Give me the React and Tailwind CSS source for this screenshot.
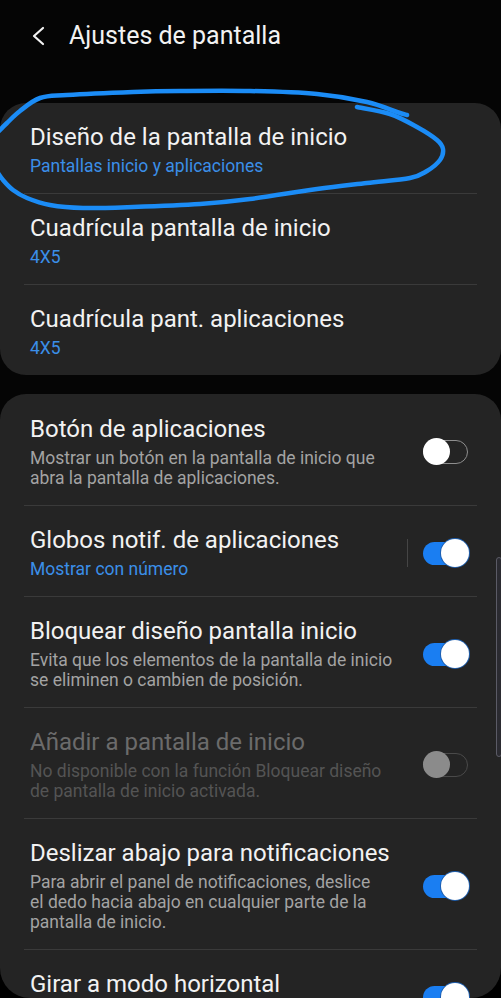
import React from "react";

// hand drawn blue ring around the first entry
const strokeA = [
  [407, 115], [397, 112], [367, 102], [317, 94], [250, 91], [180, 91], [133, 92],
  [67, 95], [40, 98], [20, 111], [7, 123], [-3, 133],
];
const strokeB = [
  [357, 107], [390, 114], [417, 127], [437, 140], [443, 149], [440, 160],
  [427, 171], [410, 178], [367, 183], [317, 189], [250, 199], [200, 204],
  [133, 207], [83, 208], [50, 205], [27, 198], [13, 190], [3, 180], [-4, 170],
];

function smooth(pts) {
  let d = `M${pts[0][0]} ${pts[0][1]}`;
  for (let i = 0; i < pts.length - 1; i++) {
    const p0 = pts[i - 1] || pts[i];
    const p1 = pts[i];
    const p2 = pts[i + 1];
    const p3 = pts[i + 2] || p2;
    const c1 = [p1[0] + (p2[0] - p0[0]) / 6, p1[1] + (p2[1] - p0[1]) / 6];
    const c2 = [p2[0] - (p3[0] - p1[0]) / 6, p2[1] - (p3[1] - p1[1]) / 6];
    d += ` C${c1[0]} ${c1[1]} ${c2[0]} ${c2[1]} ${p2[0]} ${p2[1]}`;
  }
  return d;
}

function Toggle({ on, disabled }) {
  if (on) {
    return (
      <div className="relative w-[46px] h-[28px] shrink-0">
        <div className="absolute left-0 top-[3px] w-[45px] h-[23px] rounded-full bg-[#1a7ef2]" />
        <div className="absolute right-0 top-0 w-[28px] h-[28px] rounded-full bg-white shadow-[0_0_0_1px_#1f5fae]" />
      </div>
    );
  }
  return (
    <div className="relative w-[46px] h-[28px] shrink-0">
      <div
        className={
          "absolute left-0 top-[2px] w-[45px] h-[24px] rounded-full border-[1.5px] " +
          (disabled ? "border-[#4a4a4a]" : "border-[#8e8e8e]")
        }
      />
      <div
        className={
          "absolute left-0 top-0 w-[27px] h-[27px] rounded-full " +
          (disabled ? "bg-[#8b8b8b]" : "bg-white")
        }
      />
    </div>
  );
}

function Divider() {
  return <div className="mx-[24px] h-px bg-[#3a3a3a]" />;
}

function Row({ title, sub, lines, toggle, disabled, split }) {
  return (
    <div className="flex items-center pl-[30px] pr-[32px] pt-[20px] pb-[17px]">
      <div className="flex-1 min-w-0">
        <div
          className={
            "text-[24px] leading-[28px] whitespace-nowrap " +
            (disabled ? "text-[#6b6b6b]" : "text-[#f2f2f2]")
          }
        >
          {title}
        </div>
        {sub && (
          <div className="mt-[5px] text-[17.5px] leading-[20px] text-[#3b8fe8] whitespace-nowrap">
            {sub}
          </div>
        )}
        {lines && (
          <div
            className={
              "mt-[5px] text-[17.5px] leading-[20px] " +
              (disabled ? "text-[#545454]" : "text-[#a3a3a3]")
            }
          >
            {lines.map((l) => (
              <div key={l} className="whitespace-nowrap">
                {l}
              </div>
            ))}
          </div>
        )}
      </div>
      {split && <div className="w-px h-[28px] bg-[#454545] mr-[15px]" />}
      {toggle !== undefined && <Toggle on={toggle} disabled={disabled} />}
    </div>
  );
}

export default function App() {
  return (
    <div className="min-h-screen bg-black" style={{ fontFamily: "Roboto, 'Noto Sans', sans-serif" }}>
      <div className="relative w-[501px] h-[998px] overflow-hidden rounded-b-[30px] bg-[#050505]">
        {/* header */}
        <div className="h-[103px] flex items-start pt-[21px]">
          <svg width="16" height="22" viewBox="0 0 16 22" className="ml-[30px] mt-[4px]">
            <polyline points="13,3 4,11 13,19" fill="none" stroke="#f2f2f2" strokeWidth="2.2" strokeLinecap="round" strokeLinejoin="round" />
          </svg>
          <h1 className="ml-[23px] text-[25px] leading-[30px] text-[#f2f2f2]">Ajustes de pantalla</h1>
        </div>

        {/* first card */}
        <div className="bg-[#242424] rounded-[26px]">
          <Row title="Diseño de la pantalla de inicio" sub="Pantallas inicio y aplicaciones" />
          <Divider />
          <Row title="Cuadrícula pantalla de inicio" sub="4X5" />
          <Divider />
          <Row title="Cuadrícula pant. aplicaciones" sub="4X5" />
        </div>

        {/* second card */}
        <div className="mt-[19px] bg-[#242424] rounded-t-[26px] pt-[1px]">
          <Row
            title="Botón de aplicaciones"
            lines={["Mostrar un botón en la pantalla de inicio que", "abra la pantalla de aplicaciones."]}
            toggle={false}
          />
          <Divider />
          <Row title="Globos notif. de aplicaciones" sub="Mostrar con número" toggle={true} split />
          <Divider />
          <Row
            title="Bloquear diseño pantalla inicio"
            lines={["Evita que los elementos de la pantalla de inicio", "se eliminen o cambien de posición."]}
            toggle={true}
          />
          <Divider />
          <Row
            title="Añadir a pantalla de inicio"
            lines={["No disponible con la función Bloquear diseño", "de pantalla de inicio activada."]}
            toggle={false}
            disabled
          />
          <Divider />
          <Row
            title="Deslizar abajo para notificaciones"
            lines={[
              "Para abrir el panel de notificaciones, deslice",
              "el dedo hacia abajo en cualquier parte de la",
              "pantalla de inicio.",
            ]}
            toggle={true}
          />
          <Divider />
          <Row title="Girar a modo horizontal" sub="Solo con pantalla de inicio" toggle={true} />
        </div>

        {/* scrollbar */}
        <div className="absolute left-[496px] top-[557px] w-[6px] h-[200px] rounded-full border border-[#5b5b66] bg-[#2b2b31]" />

        {/* annotation */}
        <svg className="absolute left-0 top-0 pointer-events-none" width="501" height="240" viewBox="0 0 501 240">
          <path d={smooth(strokeA)} fill="none" stroke="#1b8cf6" strokeWidth="4.5" strokeLinecap="round" strokeLinejoin="round" />
          <path d={smooth(strokeB)} fill="none" stroke="#1b8cf6" strokeWidth="4.5" strokeLinecap="round" strokeLinejoin="round" />
        </svg>
      </div>
    </div>
  );
}
